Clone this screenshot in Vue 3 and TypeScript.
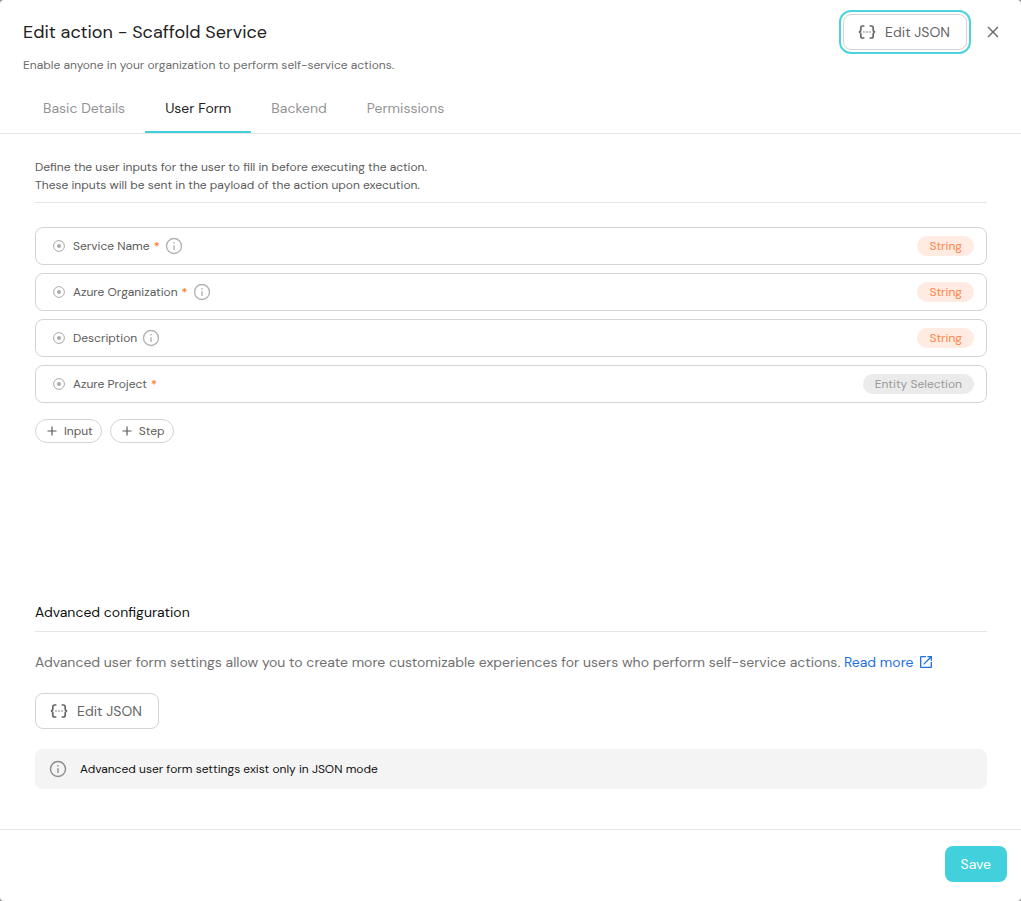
<script setup lang="ts">
import { ref } from 'vue'

interface Field {
  name: string
  required: boolean
  info: boolean
  type: string
  tone: 'orange' | 'gray'
}

const tabs: string[] = ['Basic Details', 'User Form', 'Backend', 'Permissions']
const activeTab = ref<string>('User Form')

const bracesPath =
  'M6.4 1H4.6Q2.8 1 2.8 2.8V4.8Q2.8 7 0.8 7Q2.8 7 2.8 9.2V11.2Q2.8 13 4.6 13H6.4M11.6 1H13.4Q15.2 1 15.2 2.8V4.8Q15.2 7 17.2 7Q15.2 7 15.2 9.2V11.2Q15.2 13 13.4 13H11.6'

const fields: Field[] = [
  { name: 'Service Name', required: true, info: true, type: 'String', tone: 'orange' },
  { name: 'Azure Organization', required: true, info: true, type: 'String', tone: 'orange' },
  { name: 'Description', required: false, info: true, type: 'String', tone: 'orange' },
  { name: 'Azure Project', required: true, info: false, type: 'Entity Selection', tone: 'gray' },
]
</script>

<template>
  <main class="dialog">
    <header class="header">
      <div class="headline">
        <h1 class="title">Edit action - Scaffold Service</h1>
        <p class="subtitle">Enable anyone in your organization to perform self-service actions.</p>
      </div>
      <div class="header-actions">
        <button type="button" class="btn-json focused">
          <svg class="json-icon" viewBox="0 0 18 14" aria-hidden="true">
            <path :d="bracesPath" />
            <path class="dots" d="M6 7h.01M9 7h.01M12 7h.01" />
          </svg>
          Edit JSON
        </button>
        <button type="button" class="close" aria-label="Close">
          <svg viewBox="0 0 12 12" aria-hidden="true"><path d="M1 1L11 11M11 1L1 11" /></svg>
        </button>
      </div>
    </header>

    <nav class="tabs" role="tablist">
      <button
        v-for="tab in tabs"
        :key="tab"
        type="button"
        role="tab"
        class="tab"
        :class="{ active: tab === activeTab }"
        :aria-selected="tab === activeTab"
        @click="activeTab = tab"
      >
        {{ tab }}
      </button>
    </nav>

    <div class="content">
      <section>
        <p class="intro">
          Define the user inputs for the user to fill in before executing the action.<br />
          These inputs will be sent in the payload of the action upon execution.
        </p>
        <ul class="fields">
          <li v-for="field in fields" :key="field.name" class="field">
            <svg class="target" viewBox="0 0 12 12" aria-hidden="true">
              <circle cx="6" cy="6" r="5.4" />
              <circle class="dot" cx="6" cy="6" r="2" />
            </svg>
            <span class="name">{{ field.name }}</span>
            <span v-if="field.required" class="star">*</span>
            <svg v-if="field.info" class="info" viewBox="0 0 18 18" aria-hidden="true">
              <circle cx="9" cy="9" r="7.5" />
              <path d="M9 8.2V13M9 5V6.4" />
            </svg>
            <span class="chip" :class="field.tone">{{ field.type }}</span>
          </li>
        </ul>
        <div class="adders">
          <button v-for="kind in ['Input', 'Step']" :key="kind" type="button" class="adder">
            <svg viewBox="0 0 10 10" aria-hidden="true"><path d="M5 0.5V9.5M0.5 5H9.5" /></svg>
            {{ kind }}
          </button>
        </div>
      </section>

      <section class="advanced">
        <h2 class="section-title">Advanced configuration</h2>
        <p class="description">
          Advanced user form settings allow you to create more customizable experiences for users who perform self-service actions.
          <a href="#" class="link">Read more<svg viewBox="0 0 24 24" aria-hidden="true"><path d="M19 19H5V5h7V3H5c-1.11 0-2 .9-2 2v14c0 1.1.89 2 2 2h14c1.1 0 2-.9 2-2v-7h-2zM14 3v2h3.59l-9.83 9.83 1.41 1.41L19 6.41V10h2V3z" /></svg></a>
        </p>
        <button type="button" class="btn-json">
          <svg class="json-icon" viewBox="0 0 18 14" aria-hidden="true">
            <path :d="bracesPath" />
            <path class="dots" d="M6 7h.01M9 7h.01M12 7h.01" />
          </svg>
          Edit JSON
        </button>
        <div class="notice">
          <svg class="info" viewBox="0 0 18 18" aria-hidden="true">
            <circle cx="9" cy="9" r="7.5" />
            <path d="M9 8.2V13M9 5V6.4" />
          </svg>
          <span>Advanced user form settings exist only in JSON mode</span>
        </div>
      </section>
    </div>

    <footer class="footer">
      <button type="button" class="save">Save</button>
    </footer>
  </main>
</template>

<style>
html {
  background: #8f8f8f;
}
</style>

<style scoped>
.dialog {
  box-sizing: border-box;
  min-height: 100vh;
  display: flex;
  flex-direction: column;
  background: #fff;
  border-radius: 4px;
  font-family: "DM Sans", Inter, sans-serif;
  font-size: 12px;
  color: #5a5a5a;
}
h1, h2, p, ul {
  margin: 0;
  padding: 0;
  font-weight: 400;
}
button {
  font-family: inherit;
  box-sizing: border-box;
  cursor: pointer;
}
svg {
  flex: none;
  fill: none;
  stroke: currentColor;
}
.header {
  display: flex;
  justify-content: space-between;
  padding: 14px 18px 0 23px;
}
.title {
  font-size: 18px;
  line-height: 36px;
  color: #222;
}
.subtitle {
  margin-top: 6px;
  line-height: 18px;
  color: #6c6c6c;
}
.header-actions {
  display: flex;
  align-items: center;
  align-self: flex-start;
  gap: 16px;
}
.btn-json {
  display: flex;
  align-items: center;
  gap: 9px;
  height: 36px;
  padding: 0 16px 0 14px;
  border: 1px solid #d4d4d4;
  border-radius: 8px;
  background: #fff;
  color: #666;
  font-size: 14px;
}
.focused {
  outline: 2px solid #4dd2de;
  outline-offset: 2px;
}
.json-icon {
  width: 18px;
  height: 14px;
  stroke-width: 1.7;
}
.json-icon .dots {
  stroke-linecap: round;
  stroke-width: 1.5;
}
.close {
  display: flex;
  padding: 4px;
  border: 0;
  background: none;
  color: #666;
}
.close svg {
  width: 12px;
  height: 12px;
  stroke-width: 1.4;
}
.tabs {
  display: flex;
  margin-top: 10px;
  padding: 0 23px;
  border-bottom: 1px solid #e6e6e6;
}
.tab {
  height: 49px;
  padding: 0 20px;
  border: 0;
  border-bottom: 2px solid transparent;
  background: none;
  color: #949494;
  font-size: 14px;
}
.tab.active {
  border-color: #41d0dc;
  color: #222;
}
.content {
  flex: 1;
  display: flex;
  flex-direction: column;
  padding: 24px 34px 40px 35px;
}
.intro {
  padding-bottom: 8px;
  border-bottom: 1px solid #e6e6e6;
  line-height: 18px;
}
.fields {
  display: flex;
  flex-direction: column;
  gap: 8px;
  margin-top: 24px;
  list-style: none;
}
.field {
  box-sizing: border-box;
  display: flex;
  align-items: center;
  height: 38px;
  padding: 0 12px 0 17px;
  border: 1px solid #d4d4d4;
  border-radius: 8px;
}
.target {
  width: 12px;
  height: 12px;
  margin-right: 8px;
  color: #aaa;
}
.dot {
  fill: currentColor;
  stroke: none;
}
.star {
  margin-left: 4px;
  color: #ff7a2f;
  font-weight: 600;
}
.info {
  width: 18px;
  height: 18px;
  color: #b3b3b3;
  stroke-width: 1.4;
}
.field .info {
  margin-left: 5px;
}
.chip {
  margin-left: auto;
  padding: 0 12px;
  border-radius: 10px;
  line-height: 20px;
}
.chip.orange {
  background: #ffebe2;
  color: #ff8344;
}
.chip.gray {
  background: #ebebeb;
  color: #999;
}
.adders {
  display: flex;
  gap: 8px;
  margin-top: 16px;
}
.adder {
  display: flex;
  align-items: center;
  gap: 7px;
  height: 24px;
  padding: 0 8px 0 11px;
  border: 1px solid #d4d4d4;
  border-radius: 12px;
  background: #fff;
  color: #5a5a5a;
  font-size: 12px;
}
.adder svg {
  width: 10px;
  height: 10px;
  stroke-width: 1.2;
}
.advanced {
  margin-top: auto;
  padding-top: 24px;
}
.section-title {
  padding-bottom: 9px;
  border-bottom: 1px solid #e6e6e6;
  color: #111;
  font-size: 14px;
  line-height: 20px;
}
.description {
  margin: 20px 0;
  color: #707070;
  font-size: 14px;
  line-height: 21px;
}
.link {
  color: #1f6fe0;
  text-decoration: none;
}
.link svg {
  width: 16px;
  height: 16px;
  margin-left: 4px;
  vertical-align: -3px;
  fill: currentColor;
  stroke: none;
}
.notice {
  display: flex;
  align-items: center;
  gap: 13px;
  height: 40px;
  margin-top: 20px;
  padding: 0 14px;
  border-radius: 8px;
  background: #f4f4f4;
  color: #111;
}
.notice .info {
  color: #8c8c8c;
}
.footer {
  display: flex;
  justify-content: flex-end;
  padding: 16px 14px 19px;
  border-top: 1px solid #e6e6e6;
}
.save {
  height: 36px;
  padding: 0 16px;
  border: 0;
  border-radius: 8px;
  background: #41d0dc;
  color: #fff;
  font-size: 14px;
}
</style>
